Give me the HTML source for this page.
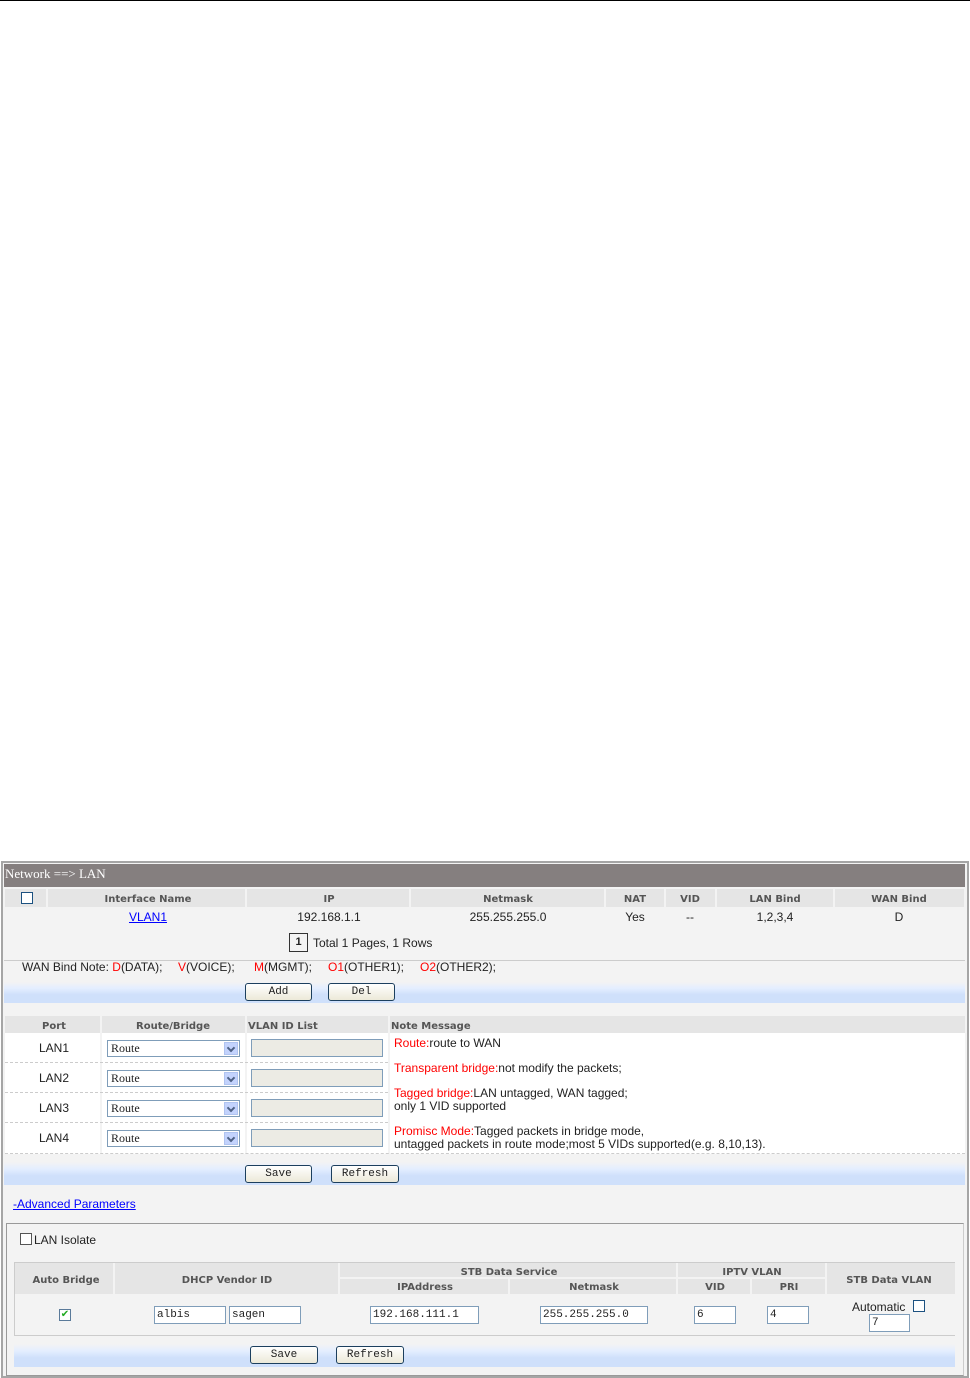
<!DOCTYPE html>
<html><head><meta charset="utf-8"><style>
*{margin:0;padding:0;box-sizing:border-box}
body{width:970px;height:1378px;background:#fff;position:relative;font-family:"Liberation Sans","DejaVu Sans",sans-serif;font-size:12px;color:#222;overflow:hidden}
.a{position:absolute}
.t{position:absolute;white-space:nowrap;line-height:13px}
.c{transform:translateX(-50%)}
.h{font-family:"DejaVu Sans",sans-serif;font-weight:bold;font-size:10px;color:#555}
.r{color:#f00}
.band{position:absolute;background:linear-gradient(#f3f3f3 0%,#e4eeff 30%,#cfe0fb 60%,#cfe0fb 100%)}
.btn{position:absolute;height:18px;border:1px solid #1c3f5e;border-radius:3px;background:linear-gradient(#fff,#ece9d8);font-family:"Liberation Mono",monospace;font-size:11px;text-align:center;line-height:16px}
.inp{position:absolute;height:18px;border:1px solid #7f9db9;background:#fff;font-family:"Liberation Mono",monospace;font-size:11px;line-height:16px;padding-left:2px}
.sel{position:absolute;width:133px;height:17px;border:1px solid #7f9db9;background:#fff;font-family:"Liberation Serif",serif;font-size:12px;line-height:15px;padding-left:3px}
.sel i{position:absolute;right:1px;top:1px;width:14px;height:13px;background:#c3d3fd;border:1px solid #b0c4f0}
.sel i:after{content:"";position:absolute;left:3px;top:2px;width:4px;height:4px;border-right:2px solid #4d6185;border-bottom:2px solid #4d6185;transform:rotate(45deg)}
.tx{position:absolute;width:132px;height:18px;border:1px solid #7f9db9;background:#ecebe4}
.dash{position:absolute;left:5px;width:383px;border-top:1px dashed #ccc}
.cb{position:absolute;width:12px;height:12px;border:1px solid #1c5180;background:#fff}
</style></head><body>
<div class="a" style="left:0;top:0;width:970px;height:1px;background:#000"></div>

<div class="a" style="left:1px;top:861px;width:968px;height:517px;background:#f3f3f3;border:2px solid #a5a5a5"></div>
<div class="a" style="left:4px;top:864px;width:961px;height:23px;background:#857f7f"></div>
<div class="t" style="left:5px;top:867px;color:#fff;font-family:'Liberation Serif',serif;font-size:13px;line-height:14px">Network ==&gt; LAN</div>

<div class="a" style="left:5px;top:889px;width:959px;height:18px;background:#e5e5e5"></div>
<div class="a" style="left:46px;top:889px;width:2px;height:18px;background:#f3f3f3"></div>
<div class="a" style="left:245px;top:889px;width:2px;height:18px;background:#f3f3f3"></div>
<div class="a" style="left:409px;top:889px;width:2px;height:18px;background:#f3f3f3"></div>
<div class="a" style="left:604px;top:889px;width:2px;height:18px;background:#f3f3f3"></div>
<div class="a" style="left:664px;top:889px;width:2px;height:18px;background:#f3f3f3"></div>
<div class="a" style="left:715px;top:889px;width:2px;height:18px;background:#f3f3f3"></div>
<div class="a" style="left:833px;top:889px;width:2px;height:18px;background:#f3f3f3"></div>
<div class="cb" style="left:21px;top:892px"></div>
<div class="t h c" style="left:148px;top:893px">Interface Name</div>
<div class="t h c" style="left:329px;top:893px">IP</div>
<div class="t h c" style="left:508px;top:893px">Netmask</div>
<div class="t h c" style="left:635px;top:893px">NAT</div>
<div class="t h c" style="left:690px;top:893px">VID</div>
<div class="t h c" style="left:775px;top:893px">LAN Bind</div>
<div class="t h c" style="left:899px;top:893px">WAN Bind</div>

<div class="t c" style="left:148px;top:911px;color:#00f;text-decoration:underline">VLAN1</div>
<div class="t c" style="left:329px;top:911px">192.168.1.1</div>
<div class="t c" style="left:508px;top:911px">255.255.255.0</div>
<div class="t c" style="left:635px;top:911px">Yes</div>
<div class="t c" style="left:690px;top:911px">--</div>
<div class="t c" style="left:775px;top:911px">1,2,3,4</div>
<div class="t c" style="left:899px;top:911px">D</div>

<div class="a" style="left:289px;top:933px;width:19px;height:19px;border:1px solid #333;font-weight:bold;text-align:center;line-height:17px;font-size:11px">1</div>
<div class="t" style="left:313px;top:937px">Total 1 Pages, 1 Rows</div>
<div class="a" style="left:4px;top:960px;width:961px;height:1px;background:#ccc"></div>
<div class="t" style="left:22px;top:961px">WAN Bind Note: <span class="r">D</span>(DATA);</div>
<div class="t" style="left:178px;top:961px"><span class="r">V</span>(VOICE);</div>
<div class="t" style="left:254px;top:961px"><span class="r">M</span>(MGMT);</div>
<div class="t" style="left:328px;top:961px"><span class="r">O1</span>(OTHER1);</div>
<div class="t" style="left:420px;top:961px"><span class="r">O2</span>(OTHER2);</div>

<div class="band" style="left:4px;top:982px;width:961px;height:21px"></div>
<div class="btn" style="left:245px;top:983px;width:67px">Add</div>
<div class="btn" style="left:328px;top:983px;width:67px">Del</div>

<div class="a" style="left:5px;top:1016px;width:960px;height:138px;background:#fff"></div>
<div class="a" style="left:5px;top:1016px;width:960px;height:17px;background:#e5e5e5"></div>
<div class="a" style="left:100px;top:1016px;width:2px;height:138px;background:#f3f3f3"></div>
<div class="a" style="left:245px;top:1016px;width:2px;height:138px;background:#f3f3f3"></div>
<div class="a" style="left:388px;top:1016px;width:2px;height:138px;background:#f3f3f3"></div>
<div class="t h c" style="left:54px;top:1020px">Port</div>
<div class="t h c" style="left:173px;top:1020px">Route/Bridge</div>
<div class="t h" style="left:248px;top:1020px">VLAN ID List</div>
<div class="t h" style="left:391px;top:1020px">Note Message</div>
<div class="dash" style="top:1062px"></div>
<div class="dash" style="top:1092px"></div>
<div class="dash" style="top:1122px"></div>
<div class="a" style="left:5px;top:1153px;width:960px;border-top:1px dashed #ccc"></div>

<div class="t c" style="left:54px;top:1042px">LAN1</div>
<div class="t c" style="left:54px;top:1072px">LAN2</div>
<div class="t c" style="left:54px;top:1102px">LAN3</div>
<div class="t c" style="left:54px;top:1132px">LAN4</div>
<div class="sel" style="left:107px;top:1040px">Route<i></i></div>
<div class="sel" style="left:107px;top:1070px">Route<i></i></div>
<div class="sel" style="left:107px;top:1100px">Route<i></i></div>
<div class="sel" style="left:107px;top:1130px">Route<i></i></div>
<div class="tx" style="left:251px;top:1039px"></div>
<div class="tx" style="left:251px;top:1069px"></div>
<div class="tx" style="left:251px;top:1099px"></div>
<div class="tx" style="left:251px;top:1129px"></div>
<div class="t" style="left:394px;top:1037px"><span class="r">Route:</span>route to WAN</div>
<div class="t" style="left:394px;top:1062px"><span class="r">Transparent bridge:</span>not modify the packets;</div>
<div class="t" style="left:394px;top:1087px"><span class="r">Tagged bridge:</span>LAN untagged, WAN tagged;</div>
<div class="t" style="left:394px;top:1100px">only 1 VID supported</div>
<div class="t" style="left:394px;top:1125px"><span class="r">Promisc Mode:</span>Tagged packets in bridge mode,</div>
<div class="t" style="left:394px;top:1138px">untagged packets in route mode;most 5 VIDs supported(e.g. 8,10,13).</div>

<div class="band" style="left:4px;top:1162px;width:961px;height:23px"></div>
<div class="btn" style="left:245px;top:1165px;width:67px">Save</div>
<div class="btn" style="left:331px;top:1165px;width:68px">Refresh</div>

<div class="t" style="left:13px;top:1198px;color:#00f;text-decoration:underline">-Advanced Parameters</div>

<div class="a" style="left:6px;top:1223px;width:958px;height:153px;border:1px solid #999;border-right-color:#ccc"></div>
<div class="cb" style="left:20px;top:1233px;border-color:#555"></div>
<div class="t" style="left:34px;top:1234px">LAN Isolate</div>

<div class="a" style="left:14px;top:1262px;width:941px;height:74px;border-top:1px solid #ccc;border-bottom:1px solid #ccc;border-left:1px solid #ccc"></div>
<div class="a" style="left:15px;top:1263px;width:940px;height:31px;background:#e5e5e5"></div>
<div class="a" style="left:113px;top:1263px;width:2px;height:31px;background:#f3f3f3"></div>
<div class="a" style="left:338px;top:1263px;width:2px;height:31px;background:#f3f3f3"></div>
<div class="a" style="left:676px;top:1263px;width:2px;height:31px;background:#f3f3f3"></div>
<div class="a" style="left:825px;top:1263px;width:2px;height:31px;background:#f3f3f3"></div>
<div class="a" style="left:340px;top:1277px;width:485px;height:2px;background:#f3f3f3"></div>
<div class="a" style="left:508px;top:1279px;width:2px;height:15px;background:#f3f3f3"></div>
<div class="a" style="left:750px;top:1279px;width:2px;height:15px;background:#f3f3f3"></div>
<div class="t h c" style="left:66px;top:1274px">Auto Bridge</div>
<div class="t h c" style="left:227px;top:1274px">DHCP Vendor ID</div>
<div class="t h c" style="left:509px;top:1266px">STB Data Service</div>
<div class="t h c" style="left:425px;top:1281px">IPAddress</div>
<div class="t h c" style="left:594px;top:1281px">Netmask</div>
<div class="t h c" style="left:752px;top:1266px">IPTV VLAN</div>
<div class="t h c" style="left:715px;top:1281px">VID</div>
<div class="t h c" style="left:789px;top:1281px">PRI</div>
<div class="t h c" style="left:889px;top:1274px">STB Data VLAN</div>

<div class="cb" style="left:59px;top:1309px;border-color:#5a7a9a;color:#2a2;font-size:10px;line-height:9px;text-align:center">✔</div>
<div class="inp" style="left:154px;top:1306px;width:72px">albis</div>
<div class="inp" style="left:229px;top:1306px;width:72px">sagen</div>
<div class="inp" style="left:370px;top:1306px;width:109px">192.168.111.1</div>
<div class="inp" style="left:540px;top:1306px;width:108px">255.255.255.0</div>
<div class="inp" style="left:694px;top:1306px;width:42px">6</div>
<div class="inp" style="left:767px;top:1306px;width:42px">4</div>
<div class="t" style="left:852px;top:1301px">Automatic</div>
<div class="cb" style="left:913px;top:1300px"></div>
<div class="inp" style="left:869px;top:1314px;width:41px">7</div>

<div class="band" style="left:14px;top:1344px;width:941px;height:23px"></div>
<div class="btn" style="left:250px;top:1346px;width:68px">Save</div>
<div class="btn" style="left:336px;top:1346px;width:68px">Refresh</div>
</body></html>
